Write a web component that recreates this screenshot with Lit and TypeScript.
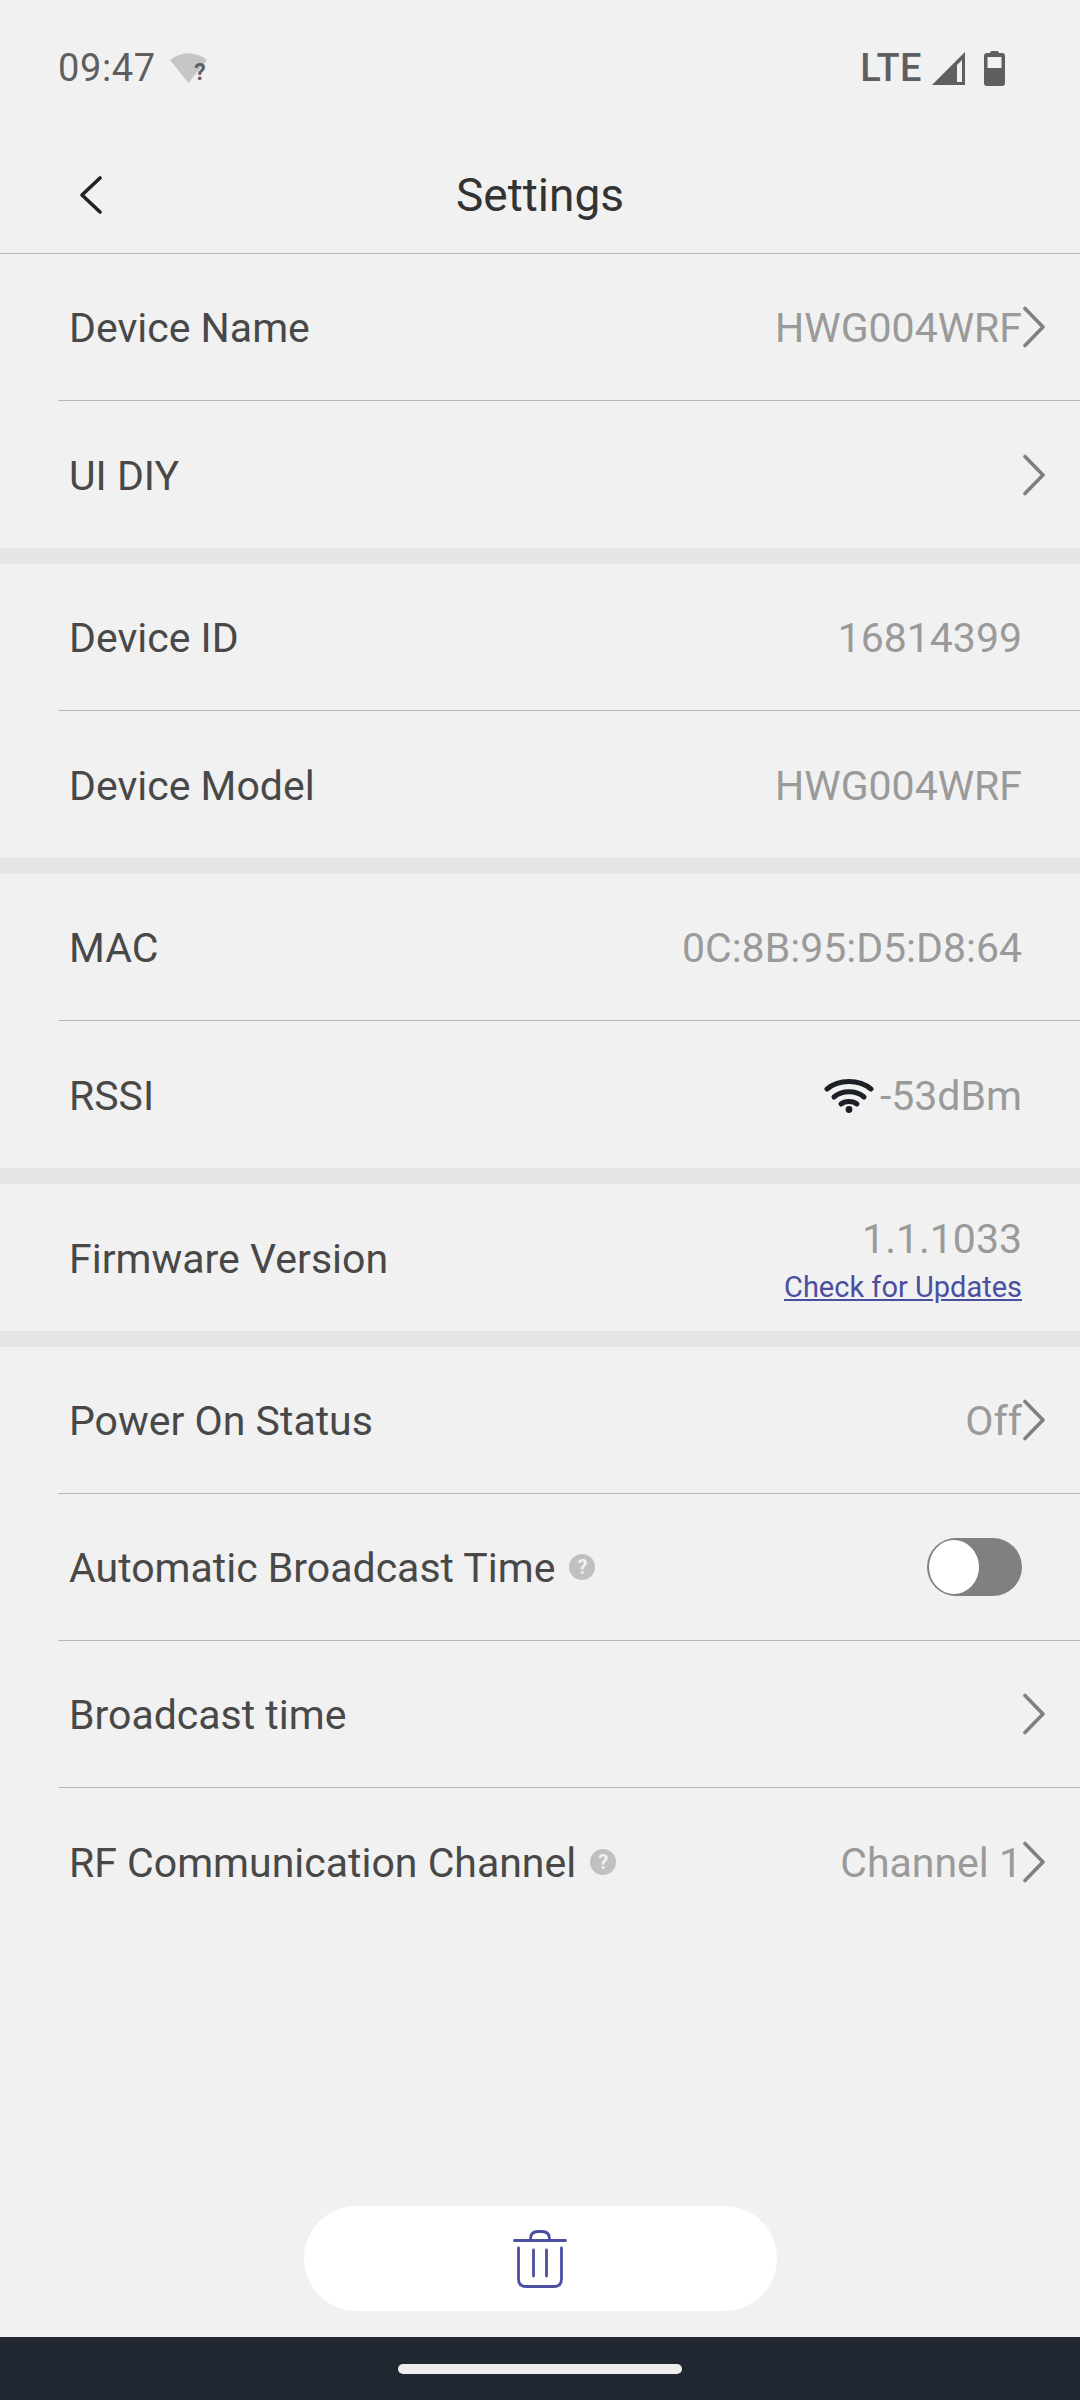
import { LitElement, css, html, nothing } from "lit";
import { customElement } from "lit/decorators.js";

type Row = {
  label: string;
  value?: string;
  help?: boolean;
  arrow?: boolean;
  toggle?: boolean;
  rssi?: boolean;
};

const groups: Row[][] = [
  [
    { label: "Device Name", value: "HWG004WRF", arrow: true },
    { label: "UI DIY", arrow: true },
  ],
  [
    { label: "Device ID", value: "16814399" },
    { label: "Device Model", value: "HWG004WRF" },
  ],
  [
    { label: "MAC", value: "0C:8B:95:D5:D8:64" },
    { label: "RSSI", value: "-53dBm", rssi: true },
  ],
];

const lastGroup: Row[] = [
  { label: "Power On Status", value: "Off", arrow: true },
  { label: "Automatic Broadcast Time", help: true, toggle: true },
  { label: "Broadcast time", arrow: true },
  { label: "RF Communication Channel", value: "Channel 1", help: true, arrow: true },
];

const chevron = html`<svg class="chevron" viewBox="0 0 24 42" fill="none" stroke="#808080" stroke-width="3.6" stroke-linecap="round" stroke-linejoin="round">
  <path d="M3 2.5 L21 21 L3 39.5" />
</svg>`;

const helpIcon = html`<span class="help">?</span>`;

const wifiIcon = html`<svg class="wifi" viewBox="0 0 50 36" fill="none" stroke="#1c1f26" stroke-width="5" stroke-linecap="round">
  <path d="M3 12 C15 2 35 2 47 12" />
  <path d="M10 20 C18 13 32 13 40 20" />
  <path d="M17 27 C21 23.6 29 23.6 33 27" />
  <circle cx="25" cy="32.5" r="3.4" fill="#1c1f26" stroke="none" />
</svg>`;

@customElement("app-root")
export class AppRoot extends LitElement {
  static styles = css`
    :host {
      display: block;
      font-family: Roboto, "Liberation Sans", sans-serif;
    }
    .page {
      display: flex;
      flex-direction: column;
      height: 2400px;
      background: #f1f1f1;
      color: #484848;
    }
    .status {
      display: flex;
      align-items: center;
      height: 134px;
      padding: 2px 75px 0 58px;
      box-sizing: border-box;
      color: #5f5f5f;
      font-size: 38px;
    }
    .time {
      letter-spacing: 0.6px;
    }
    .status-wifi {
      position: relative;
      width: 37px;
      height: 30px;
      margin-left: 14px;
    }
    .status-wifi svg {
      display: block;
      width: 37px;
      height: 30px;
    }
    .status-wifi span {
      position: absolute;
      right: 1px;
      bottom: -2px;
      font-size: 23px;
      font-weight: 700;
      line-height: 24px;
    }
    .status-right {
      display: flex;
      align-items: center;
      margin-left: auto;
    }
    .lte {
      font-weight: 500;
      letter-spacing: 0.4px;
    }
    .signal {
      width: 34px;
      height: 33px;
      margin-left: 10px;
    }
    .battery {
      width: 21px;
      height: 35px;
      margin-left: 18px;
    }
    .header {
      position: relative;
      display: flex;
      align-items: center;
      justify-content: center;
      height: 120px;
      padding-top: 3px;
      box-sizing: border-box;
      border-bottom: 1.5px solid #b8b8b8;
      font-size: 46px;
      color: #333;
    }
    .back {
      position: absolute;
      left: 79px;
      top: 42px;
      width: 24px;
      height: 38px;
    }
    .group {
      display: flex;
      flex-direction: column;
    }
    .band {
      height: 16px;
      background: #e5e5e5;
    }
    .row {
      display: flex;
      align-items: center;
      height: 147px;
      margin-left: 58px;
      padding-left: 11px;
      padding-right: 34px;
      box-sizing: border-box;
      border-bottom: 1.5px solid #b8b8b8;
      font-size: 41px;
    }
    .row:last-child {
      border-bottom: none;
    }
    .text {
      padding-top: 2px;
    }
    .help {
      display: flex;
      align-items: center;
      justify-content: center;
      width: 26px;
      height: 26px;
      margin-left: 14px;
      border-radius: 50%;
      background: #c0c0c0;
      color: #f1f1f1;
      font-size: 20px;
      font-weight: 700;
    }
    .value {
      display: flex;
      align-items: center;
      margin-left: auto;
      color: #9a9a9a;
    }
    .no-arrow {
      padding-right: 24px;
    }
    .chevron {
      display: block;
      width: 24px;
      height: 42px;
      flex: none;
    }
    .arrow-only {
      margin-left: auto;
    }
    .wifi {
      width: 50px;
      height: 36px;
      margin-right: 6px;
    }
    .toggle {
      position: relative;
      width: 95px;
      height: 58px;
      margin-left: auto;
      margin-right: 24px;
      border-radius: 29px;
      background: #808080;
    }
    .knob {
      position: absolute;
      left: 2px;
      top: 2px;
      width: 50px;
      height: 54px;
      border-radius: 50%;
      background: #fff;
    }
    .firmware {
      display: flex;
      align-items: center;
      justify-content: space-between;
      height: 147px;
      padding: 2px 58px 0 69px;
      box-sizing: border-box;
      font-size: 41px;
    }
    .firmware-right {
      display: flex;
      flex-direction: column;
      align-items: flex-end;
      margin-top: 3px;
      color: #9a9a9a;
    }
    .firmware-right span {
      line-height: 46px;
    }
    .firmware-right a {
      margin-top: 7px;
      font-size: 29px;
      line-height: 36px;
      color: #4a4f9f;
      text-decoration: underline;
    }
    .spacer {
      flex: 1;
    }
    .delete {
      display: flex;
      align-items: center;
      justify-content: center;
      align-self: center;
      width: 473px;
      height: 105px;
      margin-bottom: 26px;
      border-radius: 53px;
      background: #fff;
    }
    .delete svg {
      width: 54px;
      height: 58px;
    }
    .nav {
      display: flex;
      align-items: center;
      justify-content: center;
      height: 63px;
      background: #222831;
    }
    .pill {
      width: 284px;
      height: 10px;
      border-radius: 5px;
      background: #eee;
    }
  `;

  renderRow(row: Row) {
    const hasRight = row.value !== undefined;
    return html`<div class="row">
      <span class="text">${row.label}</span>
      ${row.help ? helpIcon : nothing}
      ${hasRight
        ? html`<span class="value ${row.arrow ? "" : "no-arrow"}">
            ${row.rssi ? wifiIcon : nothing}<span class="text">${row.value}</span>
          </span>`
        : nothing}
      ${row.toggle ? html`<span class="toggle"><span class="knob"></span></span>` : nothing}
      ${row.arrow ? html`<span class="${hasRight ? "" : "arrow-only"}">${chevron}</span>` : nothing}
    </div>`;
  }

  render() {
    return html`<div class="page">
      <div class="status">
        <span class="time">09:47</span>
        <span class="status-wifi">
          <svg viewBox="0 0 37 30"><path d="M0 7 C11 -2 26 -2 37 7 L18.5 30 Z" fill="#c6c6c6" /></svg>
          <span>?</span>
        </span>
        <span class="status-right">
          <span class="lte">LTE</span>
          <svg class="signal" viewBox="0 0 34 33">
            <path d="M0 33 L33 0 V33 Z" fill="#5f5f5f" />
            <path d="M25 13 L30 8 V30 H25 Z" fill="#f1f1f1" />
          </svg>
          <svg class="battery" viewBox="0 0 21 35">
            <path d="M6 2 Q6 0 8 0 H13 Q15 0 15 2 H18 Q21 2 21 5 V32 Q21 35 18 35 H3 Q0 35 0 32 V5 Q0 2 3 2 Z" fill="#5f5f5f" />
            <rect x="3.5" y="6" width="14" height="11" fill="#f1f1f1" />
          </svg>
        </span>
      </div>
      <div class="header">
        <svg class="back" viewBox="0 0 24 38" fill="none" stroke="#222" stroke-width="3.6" stroke-linecap="round" stroke-linejoin="round">
          <path d="M21 2 L3 19 L21 36" />
        </svg>
        Settings
      </div>
      ${groups.map(
        (g) => html`<div class="group">${g.map((r) => this.renderRow(r))}</div><div class="band"></div>`
      )}
      <div class="firmware">
        <span>Firmware Version</span>
        <div class="firmware-right">
          <span>1.1.1033</span>
          <a>Check for Updates</a>
        </div>
      </div>
      <div class="band"></div>
      <div class="group">${lastGroup.map((r) => this.renderRow(r))}</div>
      <div class="spacer"></div>
      <div class="delete">
        <svg viewBox="0 0 54 58" fill="none" stroke="#4a4f9f" stroke-width="2.8" stroke-linecap="round" stroke-linejoin="round">
          <path d="M1.5 10.5 H52.5" />
          <path d="M17.5 10.5 V9 Q17.5 1.5 25 1.5 H29 Q36.5 1.5 36.5 9 V10.5" />
          <path d="M5.5 18 V49 Q5.5 56.5 13 56.5 H41 Q48.5 56.5 48.5 49 V18" />
          <path d="M20.5 20 V46" />
          <path d="M33.5 20 V46" />
        </svg>
      </div>
      <div class="nav"><span class="pill"></span></div>
    </div>`;
  }
}
